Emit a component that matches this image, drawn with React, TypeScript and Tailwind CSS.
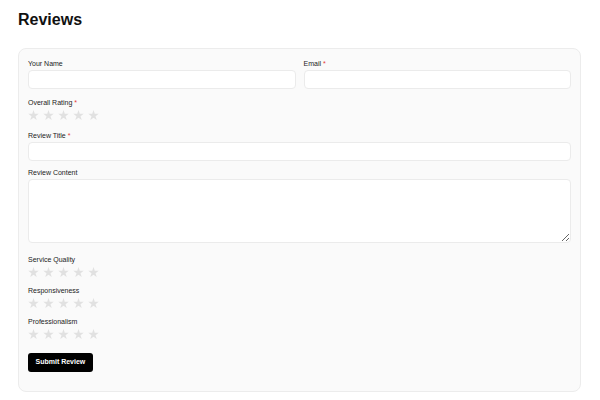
import React from 'react';

const font = { fontFamily: '"Liberation Sans", Arial, sans-serif' };

function Star() {
  return (
    <svg viewBox="0.5 0 23 21.7" className="w-[11px] h-[10px]" aria-hidden="true">
      <polygon
        fill="#e1e1e1"
        points="12,0 14.69,8.29 23.41,8.29 16.36,13.42 19.05,21.71 12,16.58 4.95,21.71 7.64,13.42 0.59,8.29 9.31,8.29"
      />
    </svg>
  );
}

function Stars() {
  return (
    <div className="flex gap-[4px] h-[10px] mt-[2px]">
      {[1, 2, 3, 4, 5].map((n) => (
        <Star key={n} />
      ))}
    </div>
  );
}

function Label({ text, required }: { text: string; required?: boolean }) {
  return (
    <label className="block text-[7px] leading-[10px] font-medium text-[#1a1a1a]">
      {text}
      {required && <span className="text-[#e53935]"> *</span>}
    </label>
  );
}

function TextInput() {
  return (
    <input
      type="text"
      className="block w-full h-[19px] mt-[1px] bg-white border border-[#ebebeb] rounded-[4px] outline-none"
    />
  );
}

export default function App() {
  // sub-ratings shown under the main review body
  const subRatings = ['Service Quality', 'Responsiveness', 'Professionalism'];

  return (
    <div className="w-[600px] h-[400px] bg-white pt-[8px] pl-[18px] pr-[19px]" style={font}>
      <h2 className="text-[16px] leading-[24px] font-bold text-[#111] mb-[16px]">Reviews</h2>

      <form className="bg-[#fafafa] border border-[#ececec] rounded-[8px] px-[9px] pt-[10px] pb-[19px]">
        <div className="grid grid-cols-2 gap-[8px]">
          <div>
            <Label text="Your Name" />
            <TextInput />
          </div>
          <div>
            <Label text="Email" required />
            <TextInput />
          </div>
        </div>

        <div className="mt-[9px]">
          <Label text="Overall Rating" required />
          <Stars />
        </div>

        <div className="mt-[11px]">
          <Label text="Review Title" required />
          <TextInput />
        </div>

        <div className="mt-[7px]">
          <Label text="Review Content" />
          <textarea className="block w-full h-[64px] mt-[1px] bg-white border border-[#ebebeb] rounded-[4px] outline-none" />
        </div>

        {subRatings.map((name, i) => (
          <div key={name} className={i === 0 ? 'mt-[12px]' : 'mt-[9px]'}>
            <Label text={name} />
            <Stars />
          </div>
        ))}

        <button
          type="button"
          className="block mt-[14px] h-[19px] px-[7.5px] bg-black text-white text-[7px] font-bold rounded-[3px]"
        >
          Submit Review
        </button>
      </form>
    </div>
  );
}
